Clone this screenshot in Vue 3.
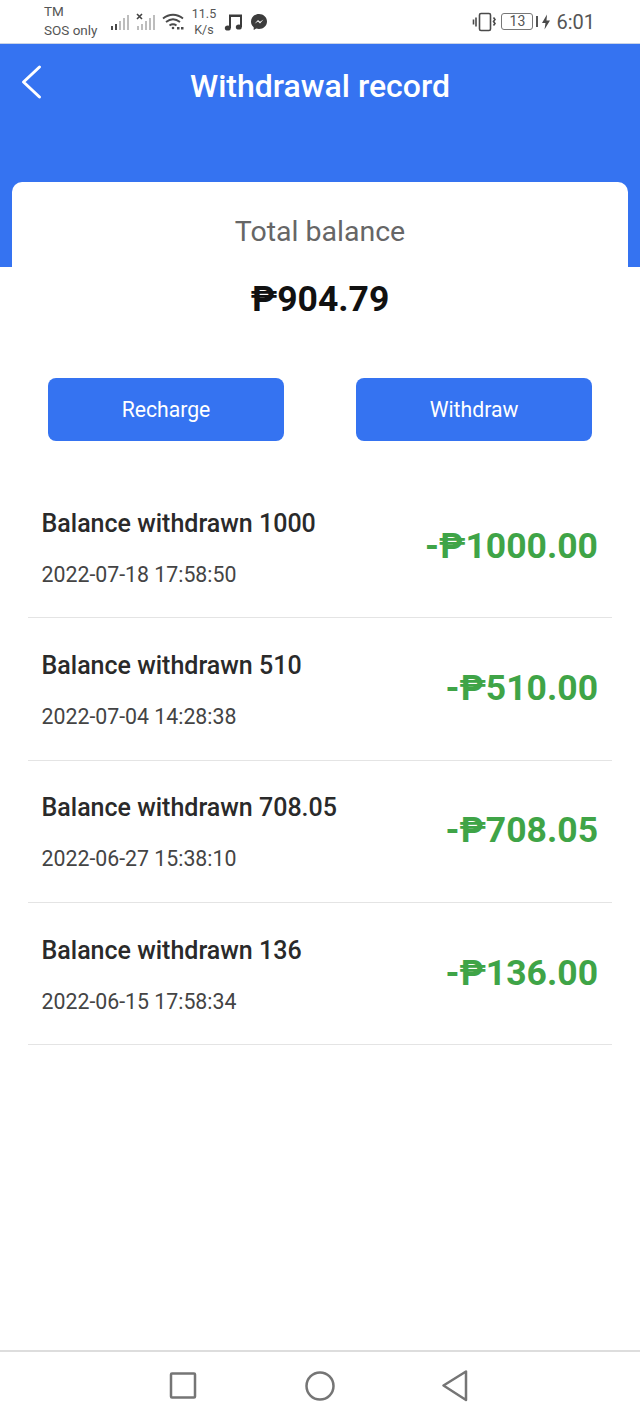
<script setup>
const records = [
  { title: 'Balance withdrawn 1000', time: '2022-07-18 17:58:50', amount: '-₱1000.00' },
  { title: 'Balance withdrawn 510', time: '2022-07-04 14:28:38', amount: '-₱510.00' },
  { title: 'Balance withdrawn 708.05', time: '2022-06-27 15:38:10', amount: '-₱708.05' },
  { title: 'Balance withdrawn 136', time: '2022-06-15 17:58:34', amount: '-₱136.00' },
]
</script>

<template>
  <div class="page">
    <div class="status">
      <div class="carrier">
        <span>TM</span>
        <span>SOS only</span>
      </div>
      <svg class="signal" width="48" height="24" viewBox="0 0 48 24">
        <g fill="#4a4a4a">
          <rect x="0" y="16" width="2" height="4" />
          <rect x="4" y="14" width="2" height="6" />
        </g>
        <g fill="#bdbdbd">
          <rect x="8" y="11" width="2" height="9" />
          <rect x="12" y="8" width="2" height="12" />
          <rect x="16" y="5" width="2" height="15" />
          <rect x="26" y="16" width="2" height="4" />
          <rect x="30" y="14" width="2" height="6" />
          <rect x="34" y="11" width="2" height="9" />
          <rect x="38" y="8" width="2" height="12" />
          <rect x="42" y="5" width="2" height="15" />
        </g>
        <path d="M26 7l5 5M31 7l-5 5" stroke="#444" stroke-width="1.6" transform="translate(0 -3)" />
      </svg>
      <svg class="wifi" width="24" height="20" viewBox="0 0 24 20" fill="none" stroke="#4a4a4a" stroke-width="1.8">
        <path d="M1 6.500C7 1.500 15 1.500 21 6.500" />
        <path d="M4 10C8.500 6.500 13.500 6.500 18 10" />
        <path d="M7.500 13.500C9.800 11.800 12.200 11.800 14.500 13.500" />
        <circle cx="11" cy="16" r="1.300" fill="#4a4a4a" stroke="none" />
        <rect x="15" y="15" width="2.500" height="2.500" fill="#4a4a4a" stroke="none" />
        <rect x="19" y="15" width="2.500" height="2.500" fill="#4a4a4a" stroke="none" />
      </svg>
      <div class="speed">
        <span>11.5</span>
        <span>K/s</span>
      </div>
      <svg class="note" width="20" height="20" viewBox="0 0 20 20" fill="#3c3c3c">
        <path d="M5 2.500H18V15H16V5H7V16H5Z" />
        <ellipse cx="3.800" cy="16" rx="3" ry="2.600" />
        <ellipse cx="14.800" cy="15" rx="3" ry="2.600" />
      </svg>
      <svg class="msg" width="18" height="18" viewBox="0 0 18 18">
        <path d="M9 1C4.500 1 1 4.200 1 8.500C1 10.800 2 12.800 3.700 14.200V17L6.300 15.600C7.200 15.800 8 16 9 16C13.500 16 17 12.700 17 8.500C17 4.200 13.500 1 9 1Z" fill="#3c3c3c" />
        <path d="M4.500 10.800L8 7L10 8.800L13.500 6.500L10 10.500L8 8.600Z" fill="#fff" />
      </svg>
      <div class="status-right">
        <svg class="vibrate" width="26" height="20" viewBox="0 0 26 20" fill="none" stroke="#4a4a4a" stroke-width="1.600">
          <rect x="7.500" y="1.500" width="11" height="17" rx="1.500" />
          <path d="M4 5.500V14.500M1.500 7.500V12.500M21.500 5.500L23 7.500L21.500 9.500L23 11.500L21.500 13.500" />
        </svg>
        <div class="battery"><span>13</span></div>
        <svg width="10" height="16" viewBox="0 0 10 16" fill="#4a4a4a">
          <path d="M6 0.500L1 9H4.500L3.500 15.500L9 6.500H5.500Z" />
        </svg>
        <span class="clock">6:01</span>
      </div>
    </div>

    <div class="head">
      <div class="head-bar">
        <svg class="back" width="24" height="36" viewBox="0 0 24 36" fill="none" stroke="#fff" stroke-width="3" stroke-linecap="round" stroke-linejoin="round">
          <path d="M19.500 3L3.500 18L19.500 33" />
        </svg>
        <h1>Withdrawal record</h1>
      </div>
    </div>

    <div class="card">
      <div class="total-label">Total balance</div>
      <div class="total-value">₱904.79</div>
      <div class="actions">
        <button>Recharge</button>
        <button>Withdraw</button>
      </div>
    </div>

    <div class="list">
      <div v-for="r in records" :key="r.time" class="row">
        <div class="row-text">
          <div class="row-title">{{ r.title }}</div>
          <div class="row-time">{{ r.time }}</div>
        </div>
        <div class="row-amount">{{ r.amount }}</div>
      </div>
    </div>

    <div class="nav">
      <svg width="30" height="30" viewBox="0 0 30 30" fill="none" stroke="#757575" stroke-width="2.500" stroke-linejoin="round">
        <rect x="3" y="2.500" width="24" height="24" rx="1" />
      </svg>
      <svg width="32" height="32" viewBox="0 0 32 32" fill="none" stroke="#757575" stroke-width="2.500">
        <circle cx="16" cy="16" r="13.500" />
      </svg>
      <svg width="30" height="34" viewBox="0 0 30 34" fill="none" stroke="#757575" stroke-width="2.500" stroke-linejoin="round">
        <path d="M24 2.500V31L1.500 16.500Z" />
      </svg>
    </div>
  </div>
</template>

<style scoped>
.page {
  position: relative;
  width: 640px;
  height: 1422px;
  overflow: hidden;
  background: #fff;
  font-family: Roboto, "DejaVu Sans", sans-serif;
  color: #222;
}

.status {
  height: 43px;
  display: flex;
  align-items: center;
  padding-left: 44px;
  padding-right: 45px;
  border-bottom: 1px solid #c9d3e6;
  color: #555;
}

.carrier {
  display: flex;
  flex-direction: column;
  width: 67px;
  font-size: 13.500px;
  line-height: 19px;
  margin-top: -1px;
}

.signal {
  margin-right: 3px;
}

.wifi {
  margin-right: 5px;
}

.speed {
  display: flex;
  flex-direction: column;
  align-items: center;
  width: 26px;
  font-size: 12.500px;
  line-height: 16px;
  margin-right: 7px;
}

.note {
  margin-right: 6px;
}

.status-right {
  margin-left: auto;
  display: flex;
  align-items: center;
  gap: 2px;
}

.battery {
  position: relative;
  width: 30px;
  height: 15px;
  margin: 0 6px 0 1px;
  border: 1px solid #777;
  border-radius: 3px;
  font-size: 14px;
  line-height: 15px;
  text-align: center;
}

.battery::after {
  content: '';
  position: absolute;
  top: 2px;
  right: -6px;
  width: 2px;
  height: 11px;
  background: #555;
}

.clock {
  font-size: 20px;
  margin-left: 3px;
}

.head {
  height: 223px;
  background: #3573f1;
  color: #fff;
}

.head-bar {
  position: relative;
  height: 84px;
  display: flex;
  align-items: center;
  justify-content: center;
}

.back {
  position: absolute;
  left: 20px;
  top: 20px;
}

h1 {
  margin: 0;
  font-size: 32px;
  font-weight: 500;
}

.card {
  margin: -85px 12px 0;
  height: 278px;
  position: relative;
  background: #fff;
  border-radius: 10px 10px 0 0;
  text-align: center;
}

.total-label {
  padding-top: 33px;
  font-size: 28.500px;
  line-height: 34px;
  color: #666;
}

.total-value {
  margin-top: 30px;
  font-size: 35.500px;
  line-height: 40px;
  font-weight: 700;
  color: #111;
}

.actions {
  margin-top: 59px;
  padding: 0 36px;
  display: flex;
  justify-content: space-between;
}

button {
  width: 236px;
  height: 63px;
  border: none;
  border-radius: 8px;
  background: #3573f1;
  color: #fff;
  font-family: inherit;
  font-size: 21.200px;
}

.list {
  margin: 16px 28px 0;
  position: relative;
}

.row {
  height: 142.300px;
  box-sizing: border-box;
  padding: 0 14px;
  display: flex;
  align-items: center;
  justify-content: space-between;
  border-bottom: 1.500px solid #e4e4e4;
}

.row-text {
  padding-top: 2px;
  margin-left: -0.5px;
}

.row-title {
  font-size: 25px;
  font-weight: 500;
  color: #2a2a2a;
}

.row-time {
  margin-top: 24px;
  font-size: 21.300px;
  color: #444;
}

.row-amount {
  margin-bottom: 2px;
  font-size: 35.500px;
  font-weight: 700;
  color: #3fa447;
}

.nav {
  position: absolute;
  left: 0;
  right: 0;
  bottom: 0;
  height: 67px;
  padding-bottom: 3px;
  border-top: 2px solid #ddd;
  display: flex;
  align-items: center;
  justify-content: center;
  gap: 106px;
}
</style>
